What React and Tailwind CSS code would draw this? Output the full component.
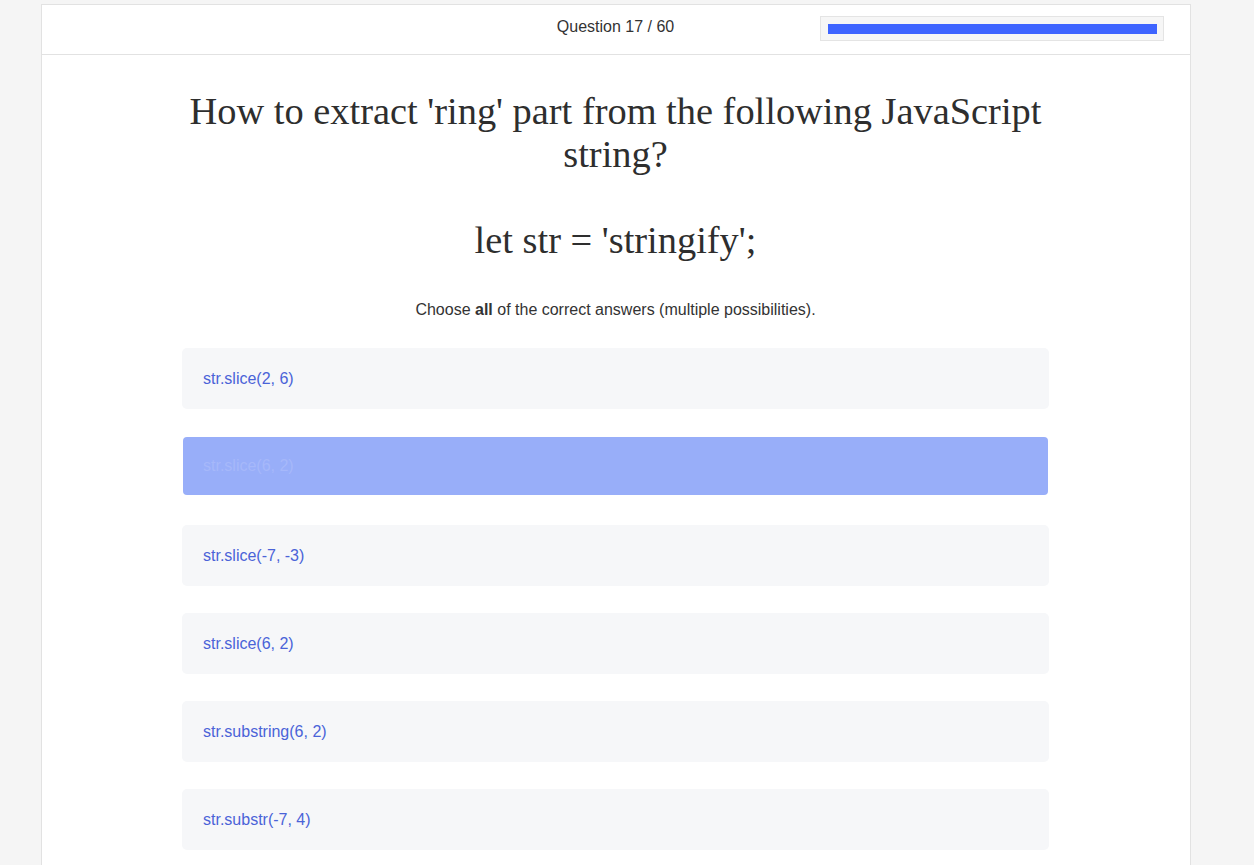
import React from "react";

const options = [
  "str.slice(2, 6)",
  "str.slice(6, 2)",
  "str.slice(-7, -3)",
  "str.slice(6, 2)",
  "str.substring(6, 2)",
  "str.substr(-7, 4)",
];

export default function App() {
  return (
    <div className="min-h-[865px] bg-[#f5f5f5] pt-[4px] [font-family:'Liberation_Sans',Arial,sans-serif]">
      <div className="ml-[41px] w-[1150px] min-h-[861px] bg-white border border-[#e2e2e2] border-b-0">
        <div className="relative h-[50px] border-b border-[#e2e2e2] flex items-center justify-center">
          <span className="text-[16px] text-[#333] -mt-[5px] -ml-[1px]">Question 17 / 60</span>
          <div className="absolute left-[778px] top-[11px] w-[344px] h-[25px] border border-[#e4e4e4] bg-[#f6f6f6] pl-[7px] pr-[6px] pt-[7px]">
            <div className="h-[10px] w-full bg-[#3e64ff]"></div>
          </div>
        </div>
        <div className="w-[867px] ml-[140px] pt-[35px]">
          <h1 className="text-center text-[38.4px] leading-[43px] text-[#2e2e2e] [font-family:'Liberation_Serif','Times_New_Roman',serif]">
            How to extract 'ring' part from the following JavaScript string?
            <br />
            <br />
            let str = 'stringify';
          </h1>
          <p className="mt-[36px] text-center text-[16px] text-[#333]">
            Choose <b>all</b> of the correct answers (multiple possibilities).
          </p>
          <div className="mt-[26px] flex flex-col gap-[27px]">
            {options.map((o, i) =>
              i === 1 ? (
                <div
                  key={i}
                  className="mx-[1px] mt-[1px] mb-[3px] h-[58px] rounded-[4px] bg-[#98aef9] flex items-center px-[20px] text-[16px] text-[#a6b8fa]"
                >
                  {o}
                </div>
              ) : (
                <div
                  key={i}
                  className="h-[61px] rounded-[5px] bg-[#f6f7f9] flex items-center px-[21px] text-[16px] text-[#4a63d8]"
                >
                  {o}
                </div>
              )
            )}
          </div>
        </div>
      </div>
    </div>
  );
}
